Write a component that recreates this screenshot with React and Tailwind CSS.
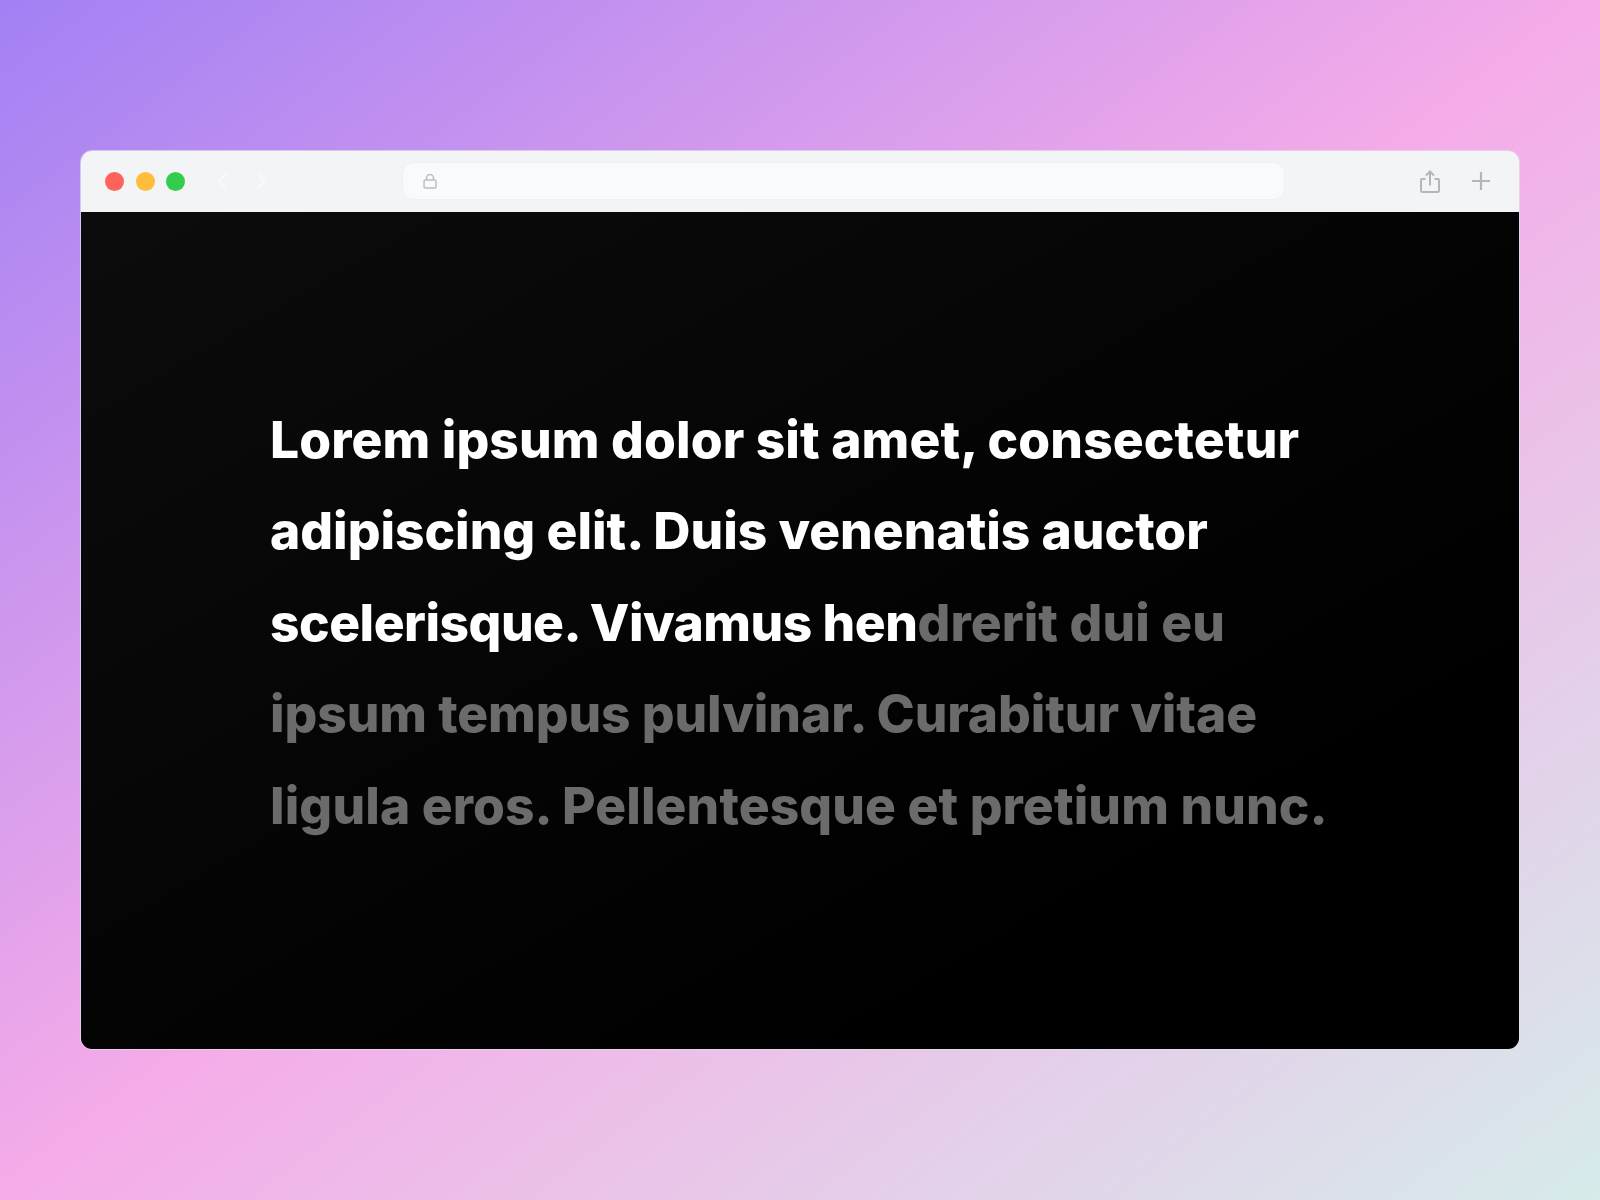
import React from 'react';

const App = () => {
  return (
    <div className="w-full h-[1200px] flex items-center justify-center bg-[linear-gradient(to_bottom_right,#a280f4,#f5ace8_50%,#d6ebea)]">
      <div className="w-[1440px] h-[900px] flex flex-col rounded-[12px] overflow-hidden border border-[#e3dfee]/70">
        {/* Toolbar */}
        <div className="h-[61px] shrink-0 flex items-center pb-[1px] bg-[#f3f4f6]">
          <div className="flex items-center gap-[11.5px] pl-[24px]">
            <div className="w-[19px] h-[19px] rounded-full bg-[#ff6259]" />
            <div className="w-[19px] h-[19px] rounded-full bg-[#ffbd3b]" />
            <div className="w-[19px] h-[19px] rounded-full bg-[#32cd4c]" />
          </div>
          <div className="flex items-center gap-[30px] pl-[32px] w-[182.5px]">
            <svg width="10" height="16" viewBox="0 0 10 16" fill="none" stroke="#fafbfc" strokeWidth="1.6">
              <path d="M9 1 L2 8 L9 15" />
            </svg>
            <svg width="10" height="16" viewBox="0 0 10 16" fill="none" stroke="#fafbfc" strokeWidth="1.6">
              <path d="M1 1 L8 8 L1 15" />
            </svg>
          </div>
          <div className="w-[883.5px] h-[38px] ml-[34px] flex items-center pl-[20px] rounded-[12px] bg-[#f9fafc] border border-[#eff0f3]">
            <svg width="14" height="15" viewBox="0 0 14 15" fill="none" stroke="#bcbdc1" strokeWidth="1.5">
              <rect x="1" y="6" width="12" height="8" rx="1.5" />
              <path d="M3.5 6 V4 a3.5 3.5 0 0 1 7 0 V6" />
            </svg>
          </div>
          <div className="flex items-center gap-[32px] ml-auto pr-[29px]">
            <svg width="20" height="23" viewBox="0 0 20 23" fill="none" stroke="#b5b6ba" strokeWidth="2">
              <path d="M5.5 9 H2 a1 1 0 0 0 -1 1 V20.5 a1.5 1.5 0 0 0 1.5 1.5 H17.5 a1.5 1.5 0 0 0 1.5 -1.5 V10 a1 1 0 0 0 -1 -1 H14.5" />
              <path d="M10 15.5 V1.5 M6 5.5 L10 1.5 L14 5.5" />
            </svg>
            <svg width="18" height="18" viewBox="0 0 18 18" fill="none" stroke="#b5b6ba" strokeWidth="2.2">
              <path d="M9 0 V18 M0 9 H18" />
            </svg>
          </div>
        </div>

        {/* Content */}
        <div className="flex-1 flex items-center pl-[189px] pb-[16px] bg-[linear-gradient(to_bottom_right,#0c0c0c,#000000_75%)]">
          <p className="font-['Inter',sans-serif] font-extrabold text-[51.5px] leading-[91.6px] tracking-[0.1px] whitespace-nowrap text-white">
            Lorem ipsum dolor sit amet, consectetur
            <br />
            <span className="tracking-[-0.03px]">adipiscing elit. Duis venenatis auctor</span>
            <br />
            <span className="tracking-[-0.5px]">scelerisque. Vivamus hen</span>
            <span className="text-[#6b6b6b]">
              drerit dui eu
              <br />
              <span className="tracking-[-0.09px]">ipsum tempus pulvinar. Curabitur vitae</span>
              <br />
              ligula eros. Pellentesque et pretium nunc.
            </span>
          </p>
        </div>
      </div>
    </div>
  );
};

export default App;
